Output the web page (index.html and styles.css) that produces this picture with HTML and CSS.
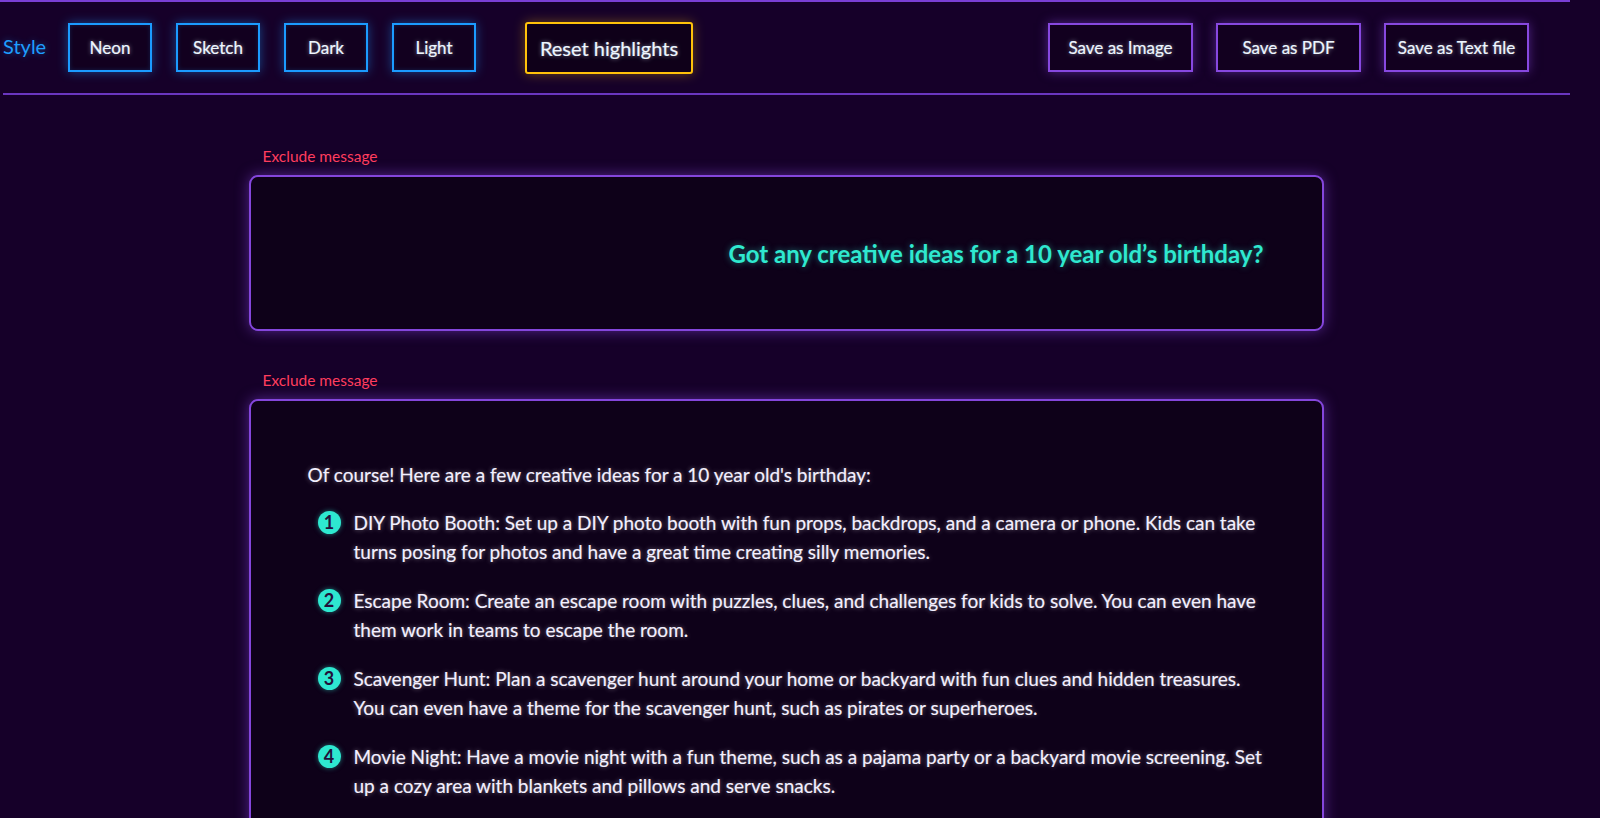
FILE: index.html
```html
<!DOCTYPE html>
<html lang="en">
<head>
<meta charset="utf-8">
<title>Chat export</title>
<link rel="stylesheet" href="styles.css">
</head>
<body>
<header class="toolbar">
  <div class="style-group">
    <span class="style-label">Style</span>
    <button class="btn btn-blue">Neon</button>
    <button class="btn btn-blue">Sketch</button>
    <button class="btn btn-blue">Dark</button>
    <button class="btn btn-blue">Light</button>
  </div>
  <button class="btn btn-yellow">Reset highlights</button>
  <div class="save-group">
    <button class="btn btn-purple">Save as Image</button>
    <button class="btn btn-purple">Save as PDF</button>
    <button class="btn btn-purple">Save as Text file</button>
  </div>
</header>

<main class="thread">
  <section class="message">
    <div class="exclude">Exclude message</div>
    <div class="bubble bubble-user">
      <p class="question">Got any creative ideas for a 10 year old’s birthday?</p>
    </div>
  </section>

  <section class="message">
    <div class="exclude">Exclude message</div>
    <div class="bubble bubble-bot">
      <p class="intro">Of course! Here are a few creative ideas for a 10 year old's birthday:</p>
      <ol class="ideas">
        <li><span class="num">1</span><span class="idea-text">DIY Photo Booth: Set up a DIY photo booth with fun props, backdrops, and a camera or phone. Kids can take turns posing for photos and have a great time creating silly memories.</span></li>
        <li><span class="num">2</span><span class="idea-text">Escape Room: Create an escape room with puzzles, clues, and challenges for kids to solve. You can even have them work in teams to escape the room.</span></li>
        <li><span class="num">3</span><span class="idea-text">Scavenger Hunt: Plan a scavenger hunt around your home or backyard with fun clues and hidden treasures. You can even have a theme for the scavenger hunt, such as pirates or superheroes.</span></li>
        <li><span class="num">4</span><span class="idea-text">Movie Night: Have a movie night with a fun theme, such as a pajama party or a backyard movie screening. Set up a cozy area with blankets and pillows and serve snacks.</span></li>
      </ol>
    </div>
  </section>
</main>
</body>
</html>
```

FILE: styles.css
```css
* { box-sizing: border-box; }

html, body {
  margin: 0;
  padding: 0;
  background: #160029;
  overflow: hidden;
}

body {
  font-family: Lato, "Open Sans", "Liberation Sans", sans-serif;
  color: #f4f0ff;
  height: 818px;
}

.toolbar {
  width: 1570px;
  height: 95px;
  display: flex;
  align-items: center;
  border-top: 2px solid #7a3fd4;
  border-bottom: 2px solid #6a36c0;
  padding: 0 41px 0 3px;
  position: relative;
}

.toolbar::after {
  content: "";
  position: absolute;
  left: 0;
  bottom: -2px;
  width: 3px;
  height: 2px;
  background: #160029;
}

.style-group {
  display: flex;
  align-items: center;
  gap: 24px;
}

.style-label {
  color: #1e9eff;
  font-size: 20px;
  width: 41px;
  text-shadow: 0 0 6px rgba(30, 158, 255, 0.45);
  margin-top: -4px;
}

.btn {
  font-family: Lato, "Open Sans", "Liberation Sans", sans-serif;
  background: #12001f;
  color: #eef6ff;
  font-size: 17px;
  height: 49px;
  padding: 0;
  cursor: pointer;
  text-shadow: 0 0 4px rgba(220, 240, 255, 0.55);
  -webkit-text-stroke: 0.2px #eef6ff;
}

.btn-blue {
  width: 84px;
  border: 2px solid #1b9bff;
  box-shadow: 0 0 10px rgba(27, 155, 255, 0.45), inset 0 0 4px rgba(27, 155, 255, 0.2);
}

.btn-yellow {
  margin-left: 49px;
  width: 168px;
  height: 52px;
  font-size: 20px;
  border: 2px solid #ffc20a;
  border-radius: 3px;
  background: #0f0019;
  box-shadow: 0 0 12px rgba(255, 194, 10, 0.35);
}

.save-group {
  margin-left: auto;
  display: flex;
  gap: 23px;
}

.btn-purple {
  width: 145px;
  height: 49px;
  font-size: 17px;
  border: 2px solid #8748e0;
  box-shadow: 0 0 10px rgba(135, 72, 224, 0.5);
}

.thread {
  width: 1572px;
  padding-top: 52px;
}

.message {
  width: 1075px;
  margin: 0 auto 40px;
}

.exclude {
  color: #ff3d5e;
  font-size: 15.5px;
  line-height: 18px;
  margin: 0 0 10px 14px;
}

.bubble {
  background: #0e0119;
  border: 2px solid #8446dc;
  border-radius: 9px;
  box-shadow: 0 0 14px rgba(132, 70, 220, 0.55);
}

.bubble-user {
  height: 156px;
  display: flex;
  align-items: center;
  justify-content: flex-end;
  padding: 0 58px;
}

.question {
  margin: 0;
  color: #2fe8cf;
  font-weight: 700;
  font-size: 24px;
  text-shadow: 0 0 6px rgba(47, 232, 207, 0.5);
}

.bubble-bot {
  padding: 59px 57px 80px;
  font-size: 19px;
  line-height: 29.5px;
  text-shadow: 0 0 5px rgba(255, 255, 255, 0.45);
  -webkit-text-stroke: 0.15px #f4f0ff;
}

.intro {
  margin: 0 0 18px;
}

.ideas {
  list-style: none;
  margin: 0;
  padding: 0 0 0 10px;
  display: flex;
  flex-direction: column;
  gap: 19px;
}

.ideas li {
  display: flex;
  align-items: flex-start;
}

.num {
  flex: none;
  width: 23px;
  height: 23px;
  margin-top: 3px;
  margin-right: 13px;
  border-radius: 50%;
  background: #2ee8d0;
  color: #22103a;
  font-weight: 700;
  font-size: 18px;
  line-height: 23px;
  text-align: center;
  text-shadow: none;
  -webkit-text-stroke: 0;
  box-shadow: 0 0 5px rgba(46, 232, 208, 0.5);
}

.idea-text {
  flex: 1;
}
```
